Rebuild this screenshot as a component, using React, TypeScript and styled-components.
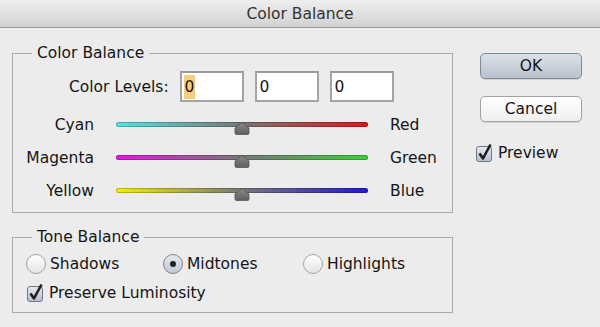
import React from "react";
import styled, { createGlobalStyle } from "styled-components";

const GlobalStyle = createGlobalStyle`
  html, body {
    margin: 0;
    padding: 0;
    background: #ececec;
  }
  * {
    box-sizing: border-box;
  }
`;

const font = `"DejaVu Sans", "Liberation Sans", sans-serif`;

const Window = styled.div`
  width: 600px;
  height: 327px;
  display: flex;
  flex-direction: column;
  background: #ececec;
  font-family: ${font};
  font-size: 15.5px;
  color: #151515;
  overflow: hidden;
`;

const TitleBar = styled.div`
  height: 28px;
  flex-shrink: 0;
  display: flex;
  align-items: center;
  justify-content: center;
  background: linear-gradient(to bottom, #eeeeee, #d2d2d2);
  border-bottom: 1px solid #9b9b9b;
  color: #333333;
  padding-top: 1px;
`;

const Body = styled.div`
  display: flex;
  padding: 16px 0 0 12px;
`;

const LeftCol = styled.div`
  width: 441px;
  display: flex;
  flex-direction: column;
  gap: 15px;
`;

const Group = styled.fieldset`
  margin: 0;
  padding: 0 0 ${(p: { $bottom: number }) => p.$bottom}px 0;
  border: 1px solid #aaaaaa;
  min-width: 0;
`;

const Legend = styled.legend`
  margin-left: 19px;
  padding: 0 5px;
  line-height: 18px;
`;

const LevelsRow = styled.div`
  display: flex;
  align-items: center;
  gap: 11px;
  height: 31px;
  margin-top: 9px;
  padding-left: 56px;
`;

const LevelInput = styled.div`
  width: 64px;
  height: 31px;
  background: #ffffff;
  border: 2px solid #a4a4a4;
  border-top-color: #9a9a9a;
  display: flex;
  align-items: center;
  padding-left: 2px;
`;

const Selected = styled.span`
  background: #f4cd7d;
  padding: 3px 1px;
  line-height: 18px;
`;

const Plain = styled.span`
  padding: 0 1px;
`;

const Sliders = styled.div`
  margin-top: 6px;
  display: flex;
  flex-direction: column;
`;

const SliderRow = styled.div`
  height: 33px;
  display: grid;
  grid-template-columns: 81px 252px auto;
  column-gap: 22px;
  align-items: center;
`;

const SideLabel = styled.span<{ $right?: boolean }>`
  text-align: ${(p) => (p.$right ? "left" : "right")};
`;

const Track = styled.div<{ $from: string; $to: string }>`
  position: relative;
  height: 5px;
  margin-top: -1px;
  border-radius: 3px;
  background: linear-gradient(to right, ${(p) => p.$from}, #777777 50%, ${(p) => p.$to});
  box-shadow: inset 0 0 0 1px rgba(0, 0, 0, 0.22);
`;

const Thumb = styled.svg`
  position: absolute;
  left: calc(50% - 8px);
  top: 0;
`;

const RadioRow = styled.div`
  margin-top: 8px;
  height: 20px;
  display: grid;
  grid-template-columns: 137px 140px auto;
  padding-left: 13px;
`;

const Option = styled.label`
  display: flex;
  align-items: center;
  gap: 4px;
`;

const RadioDot = styled.span<{ $on?: boolean }>`
  width: 20px;
  height: 20px;
  border-radius: 50%;
  border: 1px solid ${(p) => (p.$on ? "#7b8590" : "#a3a3a3")};
  background: ${(p) =>
    p.$on
      ? "linear-gradient(to bottom, #e4e9ef, #bfc8d3)"
      : "linear-gradient(to bottom, #ffffff, #e4e4e4)"};
  display: flex;
  align-items: center;
  justify-content: center;
  &::after {
    content: "";
    width: 6px;
    height: 6px;
    border-radius: 50%;
    background: ${(p) => (p.$on ? "#222" : "transparent")};
  }
`;

const CheckRow = styled.div`
  margin-top: 9px;
  height: 20px;
  padding-left: 14px;
  display: flex;
`;

const RightCol = styled.div`
  margin-left: 27px;
  margin-top: 9px;
  width: 102px;
  display: flex;
  flex-direction: column;
`;

const Button = styled.div<{ $primary?: boolean }>`
  height: 26px;
  display: flex;
  align-items: center;
  justify-content: center;
  border-radius: 5px;
  border: 1px solid ${(p) => (p.$primary ? "#7e8995" : "#a2a2a2")};
  background: ${(p) =>
    p.$primary
      ? "linear-gradient(to bottom, #dbe1e8, #b8c3ce)"
      : "linear-gradient(to bottom, #ffffff, #efefef)"};
  box-shadow: 0 1px 1px rgba(0, 0, 0, 0.12);
  & + & {
    margin-top: 17px;
  }
`;

const PreviewRow = styled.div`
  margin-top: 21px;
  margin-left: -4px;
  height: 20px;
  display: flex;
`;

const CheckBox = () => (
  <svg width="18" height="20" viewBox="0 0 18 20">
    <defs>
      <linearGradient id="cb" x1="0" y1="0" x2="0" y2="1">
        <stop offset="0" stopColor="#e6ebf1" />
        <stop offset="1" stopColor="#b3bfcc" />
      </linearGradient>
    </defs>
    <rect x="0.5" y="3.5" width="15" height="15" rx="2.5" fill="url(#cb)" stroke="#6f7882" />
    <path d="M3.5 10.5 L7 15.5 L14.5 1.5" fill="none" stroke="#1e1e1e" strokeWidth="2.6" strokeLinejoin="round" />
  </svg>
);

const ThumbIcon = () => (
  <Thumb width="16" height="13" viewBox="0 0 16 13">
    <defs>
      <linearGradient id="th" x1="0" y1="0" x2="0" y2="1">
        <stop offset="0" stopColor="#8a8a8a" />
        <stop offset="1" stopColor="#5f5f5f" />
      </linearGradient>
    </defs>
    <path d="M8 0.5 L15 6 V11 Q15 12.5 13.5 12.5 H2.5 Q1 12.5 1 11 V6 Z" fill="url(#th)" stroke="#555" strokeWidth="0.8" />
  </Thumb>
);

const sliders = [
  { left: "Cyan", right: "Red", from: "#56e2e2", to: "#e01616" },
  { left: "Magenta", right: "Green", from: "#e816e0", to: "#3ed03a" },
  { left: "Yellow", right: "Blue", from: "#f2f000", to: "#2218d4" },
];

export default function App() {
  return (
    <>
      <GlobalStyle />
      <Window>
        <TitleBar>Color Balance</TitleBar>
        <Body>
          <LeftCol>
            <Group $bottom={5}>
              <Legend>Color Balance</Legend>
              <LevelsRow>
                <span>Color Levels:</span>
                <LevelInput>
                  <Selected>0</Selected>
                </LevelInput>
                <LevelInput>
                  <Plain>0</Plain>
                </LevelInput>
                <LevelInput>
                  <Plain>0</Plain>
                </LevelInput>
              </LevelsRow>
              <Sliders>
                {sliders.map((s) => (
                  <SliderRow key={s.left}>
                    <SideLabel>{s.left}</SideLabel>
                    <Track $from={s.from} $to={s.to}>
                      <ThumbIcon />
                    </Track>
                    <SideLabel $right>{s.right}</SideLabel>
                  </SliderRow>
                ))}
              </Sliders>
            </Group>
            <Group $bottom={9}>
              <Legend>Tone Balance</Legend>
              <RadioRow>
                <Option>
                  <RadioDot />
                  Shadows
                </Option>
                <Option>
                  <RadioDot $on />
                  Midtones
                </Option>
                <Option>
                  <RadioDot />
                  Highlights
                </Option>
              </RadioRow>
              <CheckRow>
                <Option>
                  <CheckBox />
                  Preserve Luminosity
                </Option>
              </CheckRow>
            </Group>
          </LeftCol>
          <RightCol>
            <Button $primary>OK</Button>
            <Button>Cancel</Button>
            <PreviewRow>
              <Option>
                <CheckBox />
                Preview
              </Option>
            </PreviewRow>
          </RightCol>
        </Body>
      </Window>
    </>
  );
}
